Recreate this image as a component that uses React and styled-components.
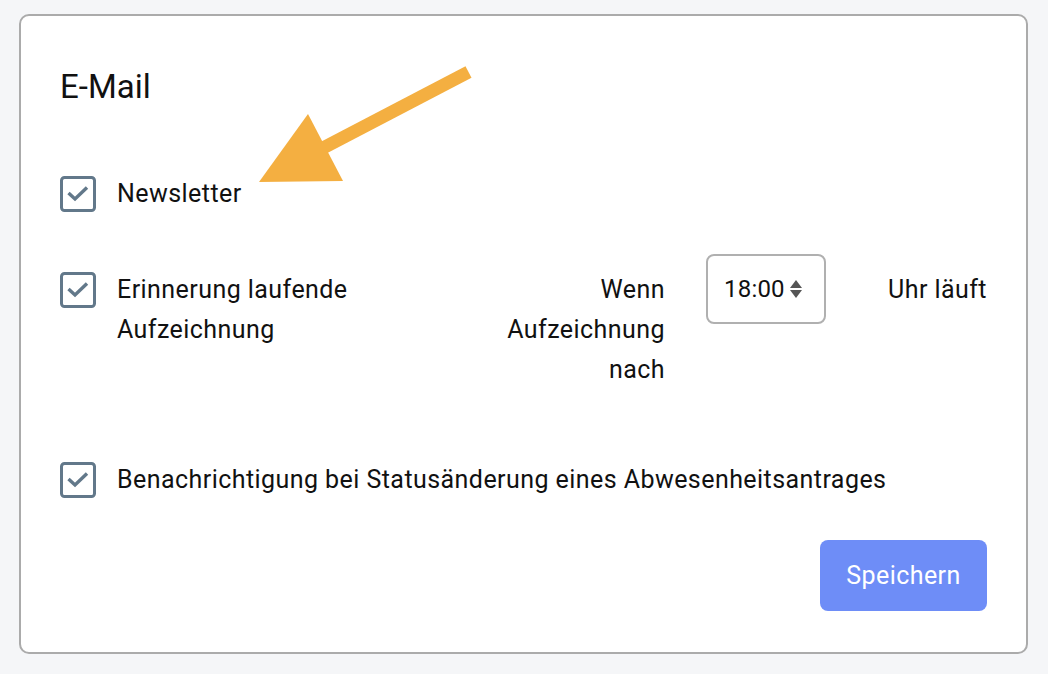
import React from "react";
import styled, { createGlobalStyle } from "styled-components";

const GlobalStyle = createGlobalStyle`
  html, body {
    margin: 0;
    padding: 0;
    background: #f5f6f8;
  }
  body {
    font-family: Roboto, "Liberation Sans", sans-serif;
    color: #111;
  }
`;

export default function App() {
  return (
    <>
      <GlobalStyle />
      <Page>
        <Card>
          <Title>E-Mail</Title>

          <OptionRow>
            <CheckBox />
            <Label>Newsletter</Label>
          </OptionRow>

          <TimeRow>
            <OptionRow>
              <CheckBox />
              <Label>
                Erinnerung laufende
                <br />
                Aufzeichnung
              </Label>
            </OptionRow>
            <Condition>Wenn Aufzeichnung nach</Condition>
            <TimeField>
              <TimeValue>18:00</TimeValue>
              <Spinner />
            </TimeField>
            <Suffix>Uhr läuft</Suffix>
          </TimeRow>

          <OptionRow $gap="70px">
            <CheckBox />
            <Label>Benachrichtigung bei Statusänderung eines Abwesenheitsantrages</Label>
          </OptionRow>

          <Actions>
            <SaveButton>Speichern</SaveButton>
          </Actions>

          <Arrow />
        </Card>
      </Page>
    </>
  );
}

function CheckBox() {
  return (
    <Box>
      <svg width="36" height="36" viewBox="0 0 36 36">
        <rect x="1.5" y="1.5" width="33" height="33" rx="3" fill="none" stroke="#62788a" strokeWidth="3" />
        <polyline points="8.5,17 15,23 27,11.5" fill="none" stroke="#62788a" strokeWidth="3.4" strokeLinejoin="miter" />
      </svg>
    </Box>
  );
}

function Spinner() {
  return (
    <svg width="12" height="20" viewBox="0 0 12 20">
      <polygon points="6,0 12,8 0,8" fill="#555" />
      <polygon points="0,10 12,10 6,18" fill="#555" />
    </svg>
  );
}

function Arrow() {
  return (
    <ArrowSvg width="260" height="160" viewBox="240 60 260 160">
      <line x1="468.5" y1="72" x2="322" y2="148.5" stroke="#f4af41" strokeWidth="13" />
      <polygon points="308,114 343,181 259,182" fill="#f4af41" />
    </ArrowSvg>
  );
}

const Page = styled.div`
  padding: 14px 20px 20px 19px;
`;

const Card = styled.div`
  position: relative;
  box-sizing: border-box;
  height: 640px;
  padding: 51px 39px 0 39px;
  background: #fff;
  border: 2px solid #ababab;
  border-radius: 10px;
`;

const Title = styled.h2`
  margin: 0;
  font-size: 33px;
  font-weight: 400;
  line-height: 40px;
  color: #111;
`;

const OptionRow = styled.div`
  display: flex;
  align-items: flex-start;
  gap: 21px;
  margin-top: ${(p) => p.$gap || "67px"};
`;

const Box = styled.span`
  display: block;
  flex: none;
  width: 36px;
  height: 36px;
  margin-top: 2px;
  svg {
    display: block;
  }
`;

const Label = styled.span`
  font-size: 25px;
  letter-spacing: 0.44px;
  line-height: 40px;
  color: #111;
`;

const TimeRow = styled.div`
  display: grid;
  grid-template-columns: 403px 161px 120px 1fr;
  column-gap: 41px;
  align-items: start;
  margin-top: 40px;
  ${OptionRow} {
    margin-top: 16px;
  }
`;

const Condition = styled.div`
  padding-top: 16px;
  font-size: 25px;
  letter-spacing: 0.44px;
  line-height: 40px;
  text-align: right;
`;

const TimeField = styled.div`
  box-sizing: border-box;
  height: 70px;
  display: flex;
  align-items: center;
  gap: 5px;
  padding-left: 16px;
  border: 2px solid #b0b0b0;
  border-radius: 8px;
  background: #fff;
  svg {
    display: block;
    margin-top: 1px;
  }
`;

const TimeValue = styled.span`
  font-size: 24px;
  letter-spacing: 0.2px;
  line-height: 40px;
`;

const Suffix = styled.div`
  justify-self: end;
  padding-top: 16px;
  font-size: 25px;
  letter-spacing: 0.44px;
  line-height: 40px;
`;

const Actions = styled.div`
  display: flex;
  justify-content: flex-end;
  margin-top: 40px;
`;

const SaveButton = styled.button`
  width: 167px;
  height: 71px;
  border: none;
  border-radius: 8px;
  background: #6e8df7;
  color: #fff;
  font-family: Roboto, "Liberation Sans", sans-serif;
  font-size: 25px;
  letter-spacing: 0.44px;
  cursor: pointer;
`;

const ArrowSvg = styled.svg`
  position: absolute;
  left: 219px;
  top: 44px;
  pointer-events: none;
`;
